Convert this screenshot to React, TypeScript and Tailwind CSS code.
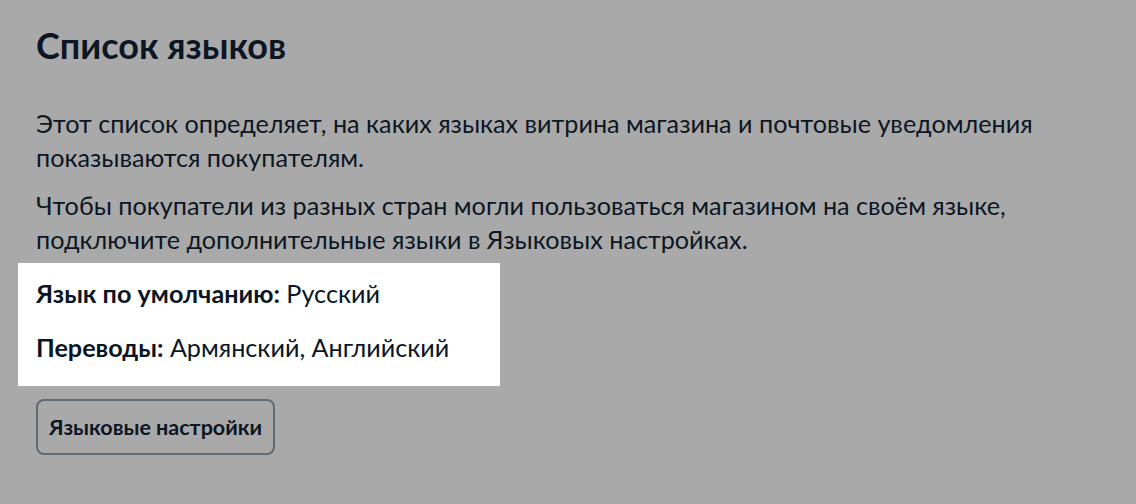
export default function App() {
  return (
    <div
      className="w-[1136px] h-[504px] bg-[#a9a9a9] text-[#0c1624] pl-[36px] overflow-hidden"
      style={{ fontFamily: "Lato, 'Noto Sans', sans-serif" }}
    >
      <h1 className="pt-[27px] text-[36px] leading-[36px] font-bold">Список языков</h1>
      <p className="mt-[43px] text-[25.2px] leading-[34px] w-[1040px]">
        Этот список определяет, на каких языках витрина магазина и почтовые уведомления показываются покупателям.
      </p>
      <p className="mt-[14px] text-[25.2px] leading-[34px] w-[1040px]">
        Чтобы покупатели из разных стран могли пользоваться магазином на своём языке, подключите дополнительные языки в Языковых настройках.
      </p>
      <div className="mt-[7px] -ml-[18px] w-[482px] bg-white pl-[18px] pt-[13px] pb-[22px] flex flex-col gap-[20px] text-[25.2px] leading-[34px] text-[#0a1626]">
        <div>
          <span className="font-bold">Язык по умолчанию:</span> Русский
        </div>
        <div>
          <span className="font-bold">Переводы:</span> Армянский, Английский
        </div>
      </div>
      <button className="mt-[13px] h-[56px] w-[239px] rounded-[8px] border-2 border-[#5f6a77] text-[21.5px] font-bold flex items-center justify-center">
        Языковые настройки
      </button>
    </div>
  );
}
